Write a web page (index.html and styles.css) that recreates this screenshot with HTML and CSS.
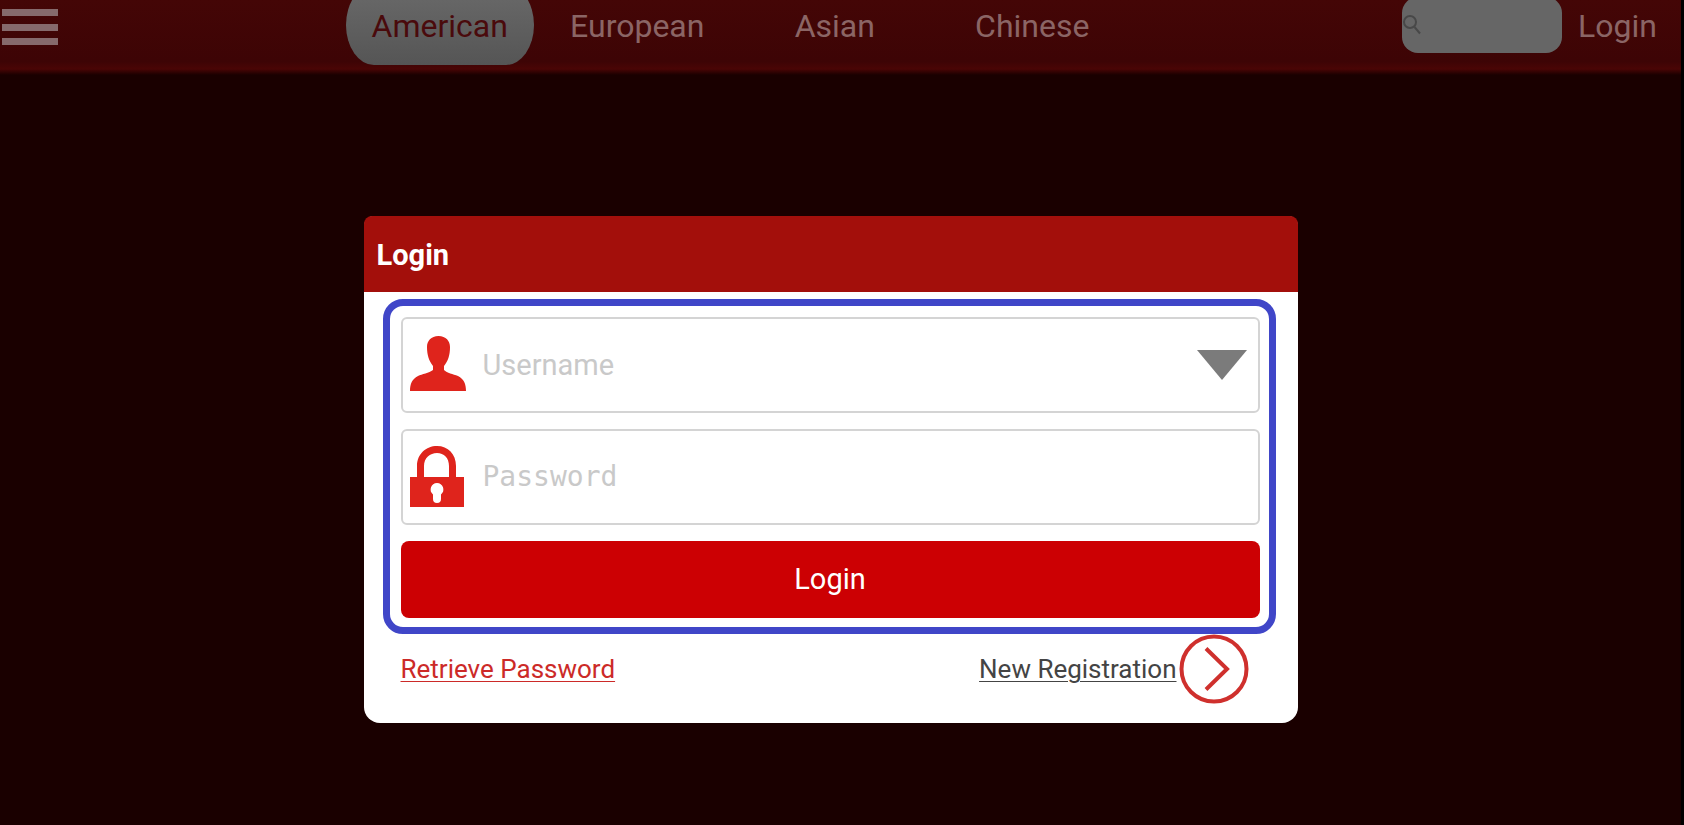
FILE: index.html
```html
<!DOCTYPE html>
<html lang="en">
<head>
<meta charset="utf-8">
<meta name="viewport" content="width=device-width, initial-scale=1">
<title>Login</title>
<link rel="stylesheet" href="styles.css">
</head>
<body>
<div class="app">
  <header class="topbar">
    <div class="topbar-row">
      <button class="menu" type="button" aria-label="Menu"><span class="menu-line"></span><span class="menu-line"></span><span class="menu-line"></span></button>
      <nav class="tabs">
        <a class="tab tab-active" href="#american">American</a>
        <a class="tab" href="#european">European</a>
        <a class="tab" href="#asian">Asian</a>
        <a class="tab" href="#chinese">Chinese</a>
      </nav>
      <div class="account">
        <label class="search">
          <svg class="search-icon" viewBox="0 0 20 22" aria-hidden="true"><circle cx="8" cy="8" r="6"/><path d="M12.500 13l5.500 6.500"/></svg>
          <input class="search-input" type="search" aria-label="Search">
        </label>
        <a class="account-link" href="#login">Login</a>
      </div>
    </div>
  </header>
  <main class="stage">
    <section class="dialog" aria-labelledby="dialog-title">
      <h1 class="dialog-title" id="dialog-title">Login</h1>
      <form class="form">
        <div class="field">
          <svg class="field-icon" viewBox="0 0 56 62" aria-hidden="true"><path d="M28.500 2C21 2 17 7 17 13C17 21 19 27 23 32V36C19 39 12 40 8 42C2 45 0 50 0 57H56C56 50 54 45 48 42C43 40 37 39 34 36V32C38 27 40 21 40 13C40 7 36 2 28.500 2Z"/></svg>
          <input class="field-input" type="text" placeholder="Username" aria-label="Username">
          <button class="drop" type="button" aria-label="Saved usernames"><svg class="drop-icon" viewBox="0 0 50 30" aria-hidden="true"><path d="M0 0H50L25 30Z"/></svg></button>
        </div>
        <div class="field">
          <svg class="field-icon" viewBox="0 0 56 62" aria-hidden="true"><path fill-rule="evenodd" d="M0 31H7V20C7 8 16 0 27 0S46 8 46 20V31H54V61H0ZM14 31H39V20C39 12 34 7 27 7S14 12 14 20ZM27 37A6.500 6.500 0 0 0 23 48.500V53A4 4 0 0 0 31 53V48.500A6.500 6.500 0 0 0 27 37Z"/></svg>
          <input class="field-input field-mono" type="password" placeholder="Password" aria-label="Password">
        </div>
        <button class="submit" type="submit">Login</button>
      </form>
      <div class="links">
        <a class="retrieve" href="#retrieve">Retrieve Password</a>
        <a class="register" href="#register"><span class="register-text">New Registration</span><svg class="register-icon" viewBox="0 0 70 70" aria-hidden="true"><circle cx="35" cy="35" r="32.500"/><path d="M27 14.500L48 35L27 55.500"/></svg></a>
      </div>
    </section>
  </main>
</div>
</body>
</html>
```
FILE: styles.css
```css
* { box-sizing: border-box; }

body {
  margin: 0;
  background: #000;
  font-family: Roboto, "Liberation Sans", sans-serif;
}

.app {
  display: flex;
  flex-direction: column;
  min-height: 100vh;
  margin-right: 3px;
  background: #1a0000;
}

.topbar {
  overflow: hidden;
  padding-bottom: 10px;
  background: linear-gradient(#440606, #3d0405 82%, #4a0505 92%, #1a0000);
}

.topbar-row {
  display: grid;
  grid-template-columns: 341fr 790fr 550fr;
  align-items: center;
  min-height: 80px;
  margin-top: -15px;
}

.menu {
  display: flex;
  flex-direction: column;
  justify-content: space-between;
  width: 56px;
  height: 36px;
  margin: 4px 0 0 2px;
  padding: 0;
  border: 0;
  background: none;
}

.menu-line {
  height: 7px;
  background: #866a6c;
}

.tabs {
  display: grid;
  grid-template-columns: repeat(4, 1fr);
}

.tab {
  height: 80px;
  margin: 0 5px;
  padding-top: 2px;
  border-radius: 28px / 40px;
  color: #8b6565;
  font-size: 32px;
  line-height: 78px;
  text-align: center;
  text-decoration: none;
}

.tab-active {
  background: linear-gradient(#6a6a6a, #555);
  color: #4a0a0c;
}

.account {
  display: flex;
  align-items: center;
  justify-content: flex-end;
  gap: 16px;
  padding-right: 24px;
}

.search {
  display: flex;
  align-items: center;
  width: 160px;
  height: 56px;
  border-radius: 16px;
  background: #666;
}

.search-icon {
  flex: none;
  width: 20px;
  height: 22px;
  fill: none;
  stroke: #484848;
  stroke-width: 2;
}

.search-input {
  flex: 1;
  min-width: 0;
  border: 0;
  outline: 0;
  background: none;
  font: inherit;
}

.account-link {
  padding-top: 2px;
  color: #8b6565;
  font-size: 32px;
  text-decoration: none;
}

.stage {
  display: flex;
  flex: 1;
  align-items: center;
  justify-content: center;
  padding: 38px 20px 0 0;
}

.dialog {
  width: 934px;
  max-width: 100%;
  border-radius: 10px 10px 16px 16px;
  background: #fff;
}

.dialog-title {
  margin: 0;
  padding: 2px 13px 0;
  border-radius: 8px 8px 0 0;
  background: #a30f0b;
  color: #fff;
  font-size: 29px;
  line-height: 74px;
}

.form {
  display: flex;
  flex-direction: column;
  gap: 16px;
  margin: 7px 22px 0 19px;
  padding: 11px 9px 9px 11px;
  border: 7px solid #4046c8;
  border-radius: 20px;
}

.field {
  display: flex;
  align-items: center;
  height: 96px;
  padding: 0 11px 0 7px;
  border: 2px solid #d4d4d4;
  border-radius: 6px;
}

.field-icon {
  flex: none;
  width: 56px;
  height: 62px;
  fill: #df241c;
}

.field-input {
  flex: 1;
  min-width: 0;
  height: 100%;
  padding: 0 0 0 17px;
  border: 0;
  outline: 0;
  background: none;
  font-family: inherit;
  font-size: 29px;
}

.field-mono {
  font-family: "DejaVu Sans Mono", monospace;
  font-size: 28px;
}

.field-input::placeholder {
  color: #c9c9c9;
  opacity: 1;
}

.drop {
  display: flex;
  padding: 0;
  border: 0;
  background: none;
}

.drop-icon {
  width: 50px;
  height: 30px;
  fill: #7b7b7b;
}

.submit {
  height: 77px;
  padding: 0;
  border: 0;
  border-radius: 8px;
  background: #cc0003;
  color: #fff;
  font-family: inherit;
  font-size: 29px;
}

.links {
  display: flex;
  align-items: center;
  justify-content: space-between;
  padding: 0 49px 19px 37px;
  font-size: 26px;
}

.retrieve {
  color: #cc2a28;
  text-decoration-thickness: 1px;
  text-underline-offset: 3px;
}

.register {
  display: flex;
  align-items: center;
  gap: 2px;
  color: #444;
  text-decoration: none;
}

.register-text {
  text-decoration: underline;
  text-decoration-thickness: 1px;
  text-underline-offset: 3px;
}

.register-icon {
  width: 70px;
  height: 70px;
  fill: none;
  stroke: #cf302d;
  stroke-width: 4;
}
```
